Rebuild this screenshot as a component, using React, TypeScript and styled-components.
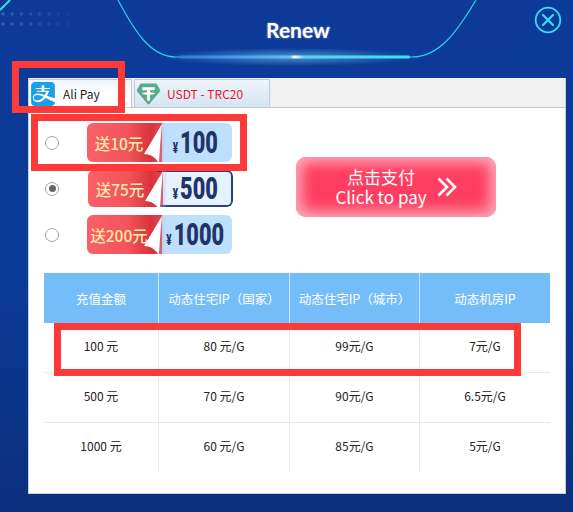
import React from "react";
import styled, { createGlobalStyle } from "styled-components";
import { SiAlipay } from "react-icons/si";

const Global = createGlobalStyle`
  html, body { margin: 0; padding: 0; }
  body { width: 573px; height: 512px; overflow: hidden; font-family: "Noto Sans CJK SC", "Noto Sans", sans-serif; }
`;

const Page = styled.div`
  position: relative;
  width: 573px;
  height: 512px;
  overflow: hidden;
  background: linear-gradient(180deg, #0d3a98 0%, #0b3a96 55%, #0c2f7c 100%);
`;

const Decor = styled.svg`
  position: absolute;
  left: 0;
  top: 0;
`;

const Header = styled.header`
  position: relative;
  height: 58px;
  padding-bottom: 20px;
  display: flex;
  align-items: center;
  justify-content: center;
  padding-left: 23px;
`;

const Title = styled.h1`
  margin: 0;
  font: 700 21px "Lato", sans-serif;
  color: #fff;
  text-shadow: 0 0 2px rgba(255,255,255,.5);
`;

const Close = styled.button`
  position: absolute;
  left: 534px;
  top: 6px;
  width: 28px;
  height: 28px;
  padding: 0;
  border: 0;
  background: none;
`;

const Panel = styled.section`
  position: relative;
  width: 536px;
  height: 415px;
  margin-left: 28px;
  background: #fff;
  border: 1px solid #c3cfda;
  border-top: 0;
  box-sizing: content-box;
`;

const TabBar = styled.div`
  display: flex;
  gap: 2px;
  height: 28px;
  padding-top: 1px;
  background: #f0f0f0;
  border-bottom: 1px solid #bfcbd6;
`;

const Tab = styled.div<{ $active?: boolean; $w: number }>`
  display: flex;
  align-items: center;
  gap: ${(p) => (p.$active ? 8 : 6)}px;
  width: ${(p) => p.$w}px;
  box-sizing: border-box;
  padding-left: ${(p) => (p.$active ? 2 : 1)}px;
  border: 1px solid #bfcbd6;
  border-bottom: 0;
  border-left-width: ${(p) => (p.$active ? 0 : 1)}px;
  background: ${(p) => (p.$active ? "linear-gradient(180deg,#eef5fa,#fff 50%)" : "linear-gradient(180deg,#edf5f9,#d5e5ef)")};
  font-size: 12px;
  color: ${(p) => (p.$active ? "#222" : "#f01030")};
`;

const Body = styled.div`
  padding: 15px 15px 0;
`;

const Top = styled.div`
  display: flex;
  align-items: flex-start;
`;

const Options = styled.div`
  display: flex;
  flex-direction: column;
  gap: 7px;
`;

const Option = styled.label`
  display: flex;
  align-items: center;
  height: 39px;
  padding-left: 1px;
`;

const Radio = styled.span<{ $on?: boolean }>`
  position: relative;
  display: flex;
  align-items: center;
  justify-content: center;
  width: 14px;
  height: 14px;
  box-sizing: border-box;
  margin-right: 28px;
  border: 1px solid #a4a4a4;
  border-radius: 50%;
  background: #fff;
  &::after {
    content: "";
    display: ${(p) => (p.$on ? "block" : "none")};
    width: 7px;
    height: 7px;
    border-radius: 50%;
    background: #666;
  }
`;

const Badge = styled.div<{ $on?: boolean }>`
  position: relative;
  display: flex;
  width: 145px;
  height: ${(p) => (p.$on ? 37 : 39)}px;
  margin-left: ${(p) => (p.$on ? 1 : 0)}px;
  border-radius: 6px;
  overflow: hidden;
  background: ${(p) => (p.$on ? "#e6f2ff" : "#bfdfff")};
`;

const Tag = styled.div`
  flex: 0 0 75px;
  box-sizing: border-box;
  padding-right: 11px;
  display: flex;
  align-items: center;
  justify-content: center;
  white-space: nowrap;
  background: linear-gradient(90deg, #fb5f68 0%, #f2545c 55%, #d9333e 85%, #e2474f 100%);
  color: #ffeca6;
  font-size: 15.5px;
  font-weight: 500;
`;

const Fold = styled.svg`
  position: absolute;
  left: 50px;
  top: 0;
`;

const Price = styled.div<{ $on?: boolean }>`
  flex: 1;
  min-width: 0;
  display: flex;
  align-items: center;
  justify-content: center;
  padding-right: 3px;
  margin-left: ${(p) => (p.$on ? -6 : 0)}px;
  padding-left: ${(p) => (p.$on ? 6 : 0)}px;
  border: ${(p) => (p.$on ? "2px solid #2b4073" : "0")};
  border-left: 0;
  border-radius: 0 6px 6px 0;
  color: #1f3468;
  font-family: "Roboto", sans-serif;
  font-weight: 900;
`;

const PriceInner = styled.span`
  display: inline-flex;
  flex-shrink: 0;
  align-items: baseline;
  gap: 3px;
  transform: scaleX(0.7);
  white-space: nowrap;
`;

const Yen = styled.span`
  font-size: 14px;
`;

const Amount = styled.span`
  font-size: 31px;
  line-height: 1;
`;

const PayButton = styled.button`
  display: flex;
  align-items: center;
  justify-content: center;
  gap: 10px;
  width: 200px;
  height: 60px;
  margin: 34px 0 0 63px;
  padding: 0;
  border: 0;
  border-radius: 10px;
  background: #ff3d60;
  box-shadow: inset 0 0 14px 6px #ffa9b8;
  color: #fff;
  font-family: "Noto Sans CJK SC", "Noto Sans", sans-serif;
  font-size: 17px;
  line-height: 20px;
  text-align: center;
`;

const PayText = styled.span`
  display: block;
  white-space: nowrap;
`;

const Table = styled.div`
  margin-top: 19px;
  width: 506px;
`;

const Row = styled.div<{ $h: number; $line?: boolean; $head?: boolean }>`
  display: grid;
  grid-template-columns: 114px 131px 130px 131px;
  height: ${(p) => p.$h}px;
  box-sizing: border-box;
  background: ${(p) => (p.$head ? "#74bdf8" : "transparent")};
  color: ${(p) => (p.$head ? "#fff" : "#222")};
  border-bottom: ${(p) => (p.$line ? "1px solid #e8e8e8" : "0")};
`;

const Cell = styled.div<{ $head?: boolean }>`
  display: flex;
  align-items: center;
  justify-content: center;
  padding-bottom: ${(p) => (p.$head ? 0 : 4)}px;
  font-size: ${(p) => (p.$head ? 12.5 : 12)}px;
  white-space: nowrap;
  border-left: 1px solid ${(p) => (p.$head ? "#cfe6fa" : "#e8e8e8")};
  &:first-child { border-left: 0; }
`;

const Mark = styled.div<{ $x: number; $y: number; $w: number; $h: number }>`
  position: absolute;
  left: ${(p) => p.$x}px;
  top: ${(p) => p.$y}px;
  width: ${(p) => p.$w}px;
  height: ${(p) => p.$h}px;
  box-sizing: border-box;
  border: 7px solid #ff3838;
`;

const dots: [number, number, number][] = [];
for (let r = 0; r < 2; r++) {
  for (let c = 0; c < 8; c++) dots.push([3 + c * 9.2, 14 + r * 10, 0.45 - c * 0.05]);
}

const options = [
  { gift: "送10元", amount: "100" },
  { gift: "送75元", amount: "500", on: true },
  { gift: "送200元", amount: "1000" },
];

const rows = [
  ["100 元", "80 元/G", "99元/G", "7元/G"],
  ["500 元", "70 元/G", "90元/G", "6.5元/G"],
  ["1000 元", "60 元/G", "85元/G", "5元/G"],
];

const Tether = () => (
  <svg width="25" height="24" viewBox="0 0 26 24">
    <path d="M6 1h14c1 0 1.600.4 2 1l3 5.500c.4.700.3 1.300-.2 1.800L14 22.500c-.6.600-1.400.6-2 0L1.200 9.300C.7 8.800.6 8.200 1 7.500L4 2c.4-.6 1-1 2-1z" fill="#5aab8e" />
    <path d="M6.500 5h13v3h-5v2.200c3 .2 5 .7 5 1.300s-2 1.100-5 1.300V19h-3v-6.200c-3-.2-5-.7-5-1.300s2-1.100 5-1.300V8h-5z" fill="#fff" />
  </svg>
);

export default function App() {
  return (
    <Page>
      <Global />
      <Decor width="573" height="78" viewBox="0 0 573 78">
        <defs>
          <linearGradient id="bar" x1="0" x2="1">
            <stop offset="0" stopColor="#2f78de" />
            <stop offset="0.48" stopColor="#5cc0f5" />
            <stop offset="0.5" stopColor="#ffffff" />
            <stop offset="0.54" stopColor="#5cd0f5" />
            <stop offset="1" stopColor="#35e4ef" />
          </linearGradient>
          <radialGradient id="halo">
            <stop offset="0" stopColor="#7fd8ff" stopOpacity="0.55" />
            <stop offset="1" stopColor="#7fd8ff" stopOpacity="0" />
          </radialGradient>
        </defs>
        {dots.map(([x, y, o], i) => (
          <circle key={i} cx={x} cy={y} r="1.800" fill="#5f8fd8" opacity={o} />
        ))}
        <path d="M0 10 L10 0" stroke="#35e0ea" strokeWidth="2" />
        <ellipse cx="291" cy="57" rx="130" ry="9" fill="url(#halo)" />
        <path d="M118 0 C134 30 150 57 176 57 H412 C440 57 458 30 476 0" fill="none" stroke="#28d4e6" strokeWidth="1.200" />
        <rect x="179" y="55.500" width="231" height="3" rx="1.500" fill="url(#bar)" />
      </Decor>
      <Header>
        <Title>Renew</Title>
        <Close aria-label="close">
          <svg width="28" height="28" viewBox="0 0 28 28" fill="none" stroke="#35e0ee" strokeWidth="1.800">
            <circle cx="14" cy="14" r="12.300" />
            <path d="M9 9l10 10M19 9L9 19" strokeWidth="2.200" strokeLinecap="round" />
          </svg>
        </Close>
      </Header>
      <Panel>
        <TabBar>
          <Tab $active $w={103}>
            <SiAlipay size={24} color="#1a9fe8" />
            Ali Pay
          </Tab>
          <Tab $w={136}>
            <Tether />
            USDT - TRC20
          </Tab>
        </TabBar>
        <Body>
          <Top>
            <Options>
              {options.map((o) => (
                <Option key={o.amount}>
                  <Radio $on={o.on} />
                  <Badge $on={o.on}>
                    <Tag>{o.gift}</Tag>
                    <Fold width="30" height="39" viewBox="50 0 30 39">
                      <defs>
                        <linearGradient id={"sh" + o.amount} x1="0" x2="1">
                          <stop offset="0" stopColor="#c46a90" stopOpacity="0.6" />
                          <stop offset="1" stopColor="#bfdfff" stopOpacity="0" />
                        </linearGradient>
                      </defs>
                      <path d="M75 0 L80 0 L80 39 L71 39 Z" fill={`url(#sh${o.amount})`} />
                      <path d="M75 1 L57 31 Q66 31 71 39 L72 39 Q73 20 75 1 Z" fill="#fff" />
                    </Fold>
                    <Price $on={o.on}>
                      <PriceInner>
                        <Yen>¥</Yen>
                        <Amount>{o.amount}</Amount>
                      </PriceInner>
                    </Price>
                  </Badge>
                </Option>
              ))}
            </Options>
            <PayButton>
              <PayText>
                点击支付
                <br />
                Click to pay
              </PayText>
              <svg width="20" height="20" viewBox="0 0 20 20" fill="none" stroke="#fff" strokeWidth="2.600">
                <path d="M1.500 1.500L10 10l-8.500 8.500M9.500 1.500L18 10l-8.500 8.500" />
              </svg>
            </PayButton>
          </Top>
          <Table>
            <Row $h={50} $head>
              {["充值金额", "动态住宅IP（国家）", "动态住宅IP（城市）", "动态机房IP"].map((h) => (
                <Cell $head key={h}>{h}</Cell>
              ))}
            </Row>
            {rows.map((r, i) => (
              <Row key={r[0]} $h={i === 2 ? 48 : 50} $line={i < 2}>
                {r.map((c) => (
                  <Cell key={c}>{c}</Cell>
                ))}
              </Row>
            ))}
          </Table>
        </Body>
      </Panel>
      <Mark $x={12} $y={61} $w={113} $h={52} />
      <Mark $x={31} $y={114} $w={216} $h={57} />
      <Mark $x={54} $y={323} $w={467} $h={53} />
    </Page>
  );
}
